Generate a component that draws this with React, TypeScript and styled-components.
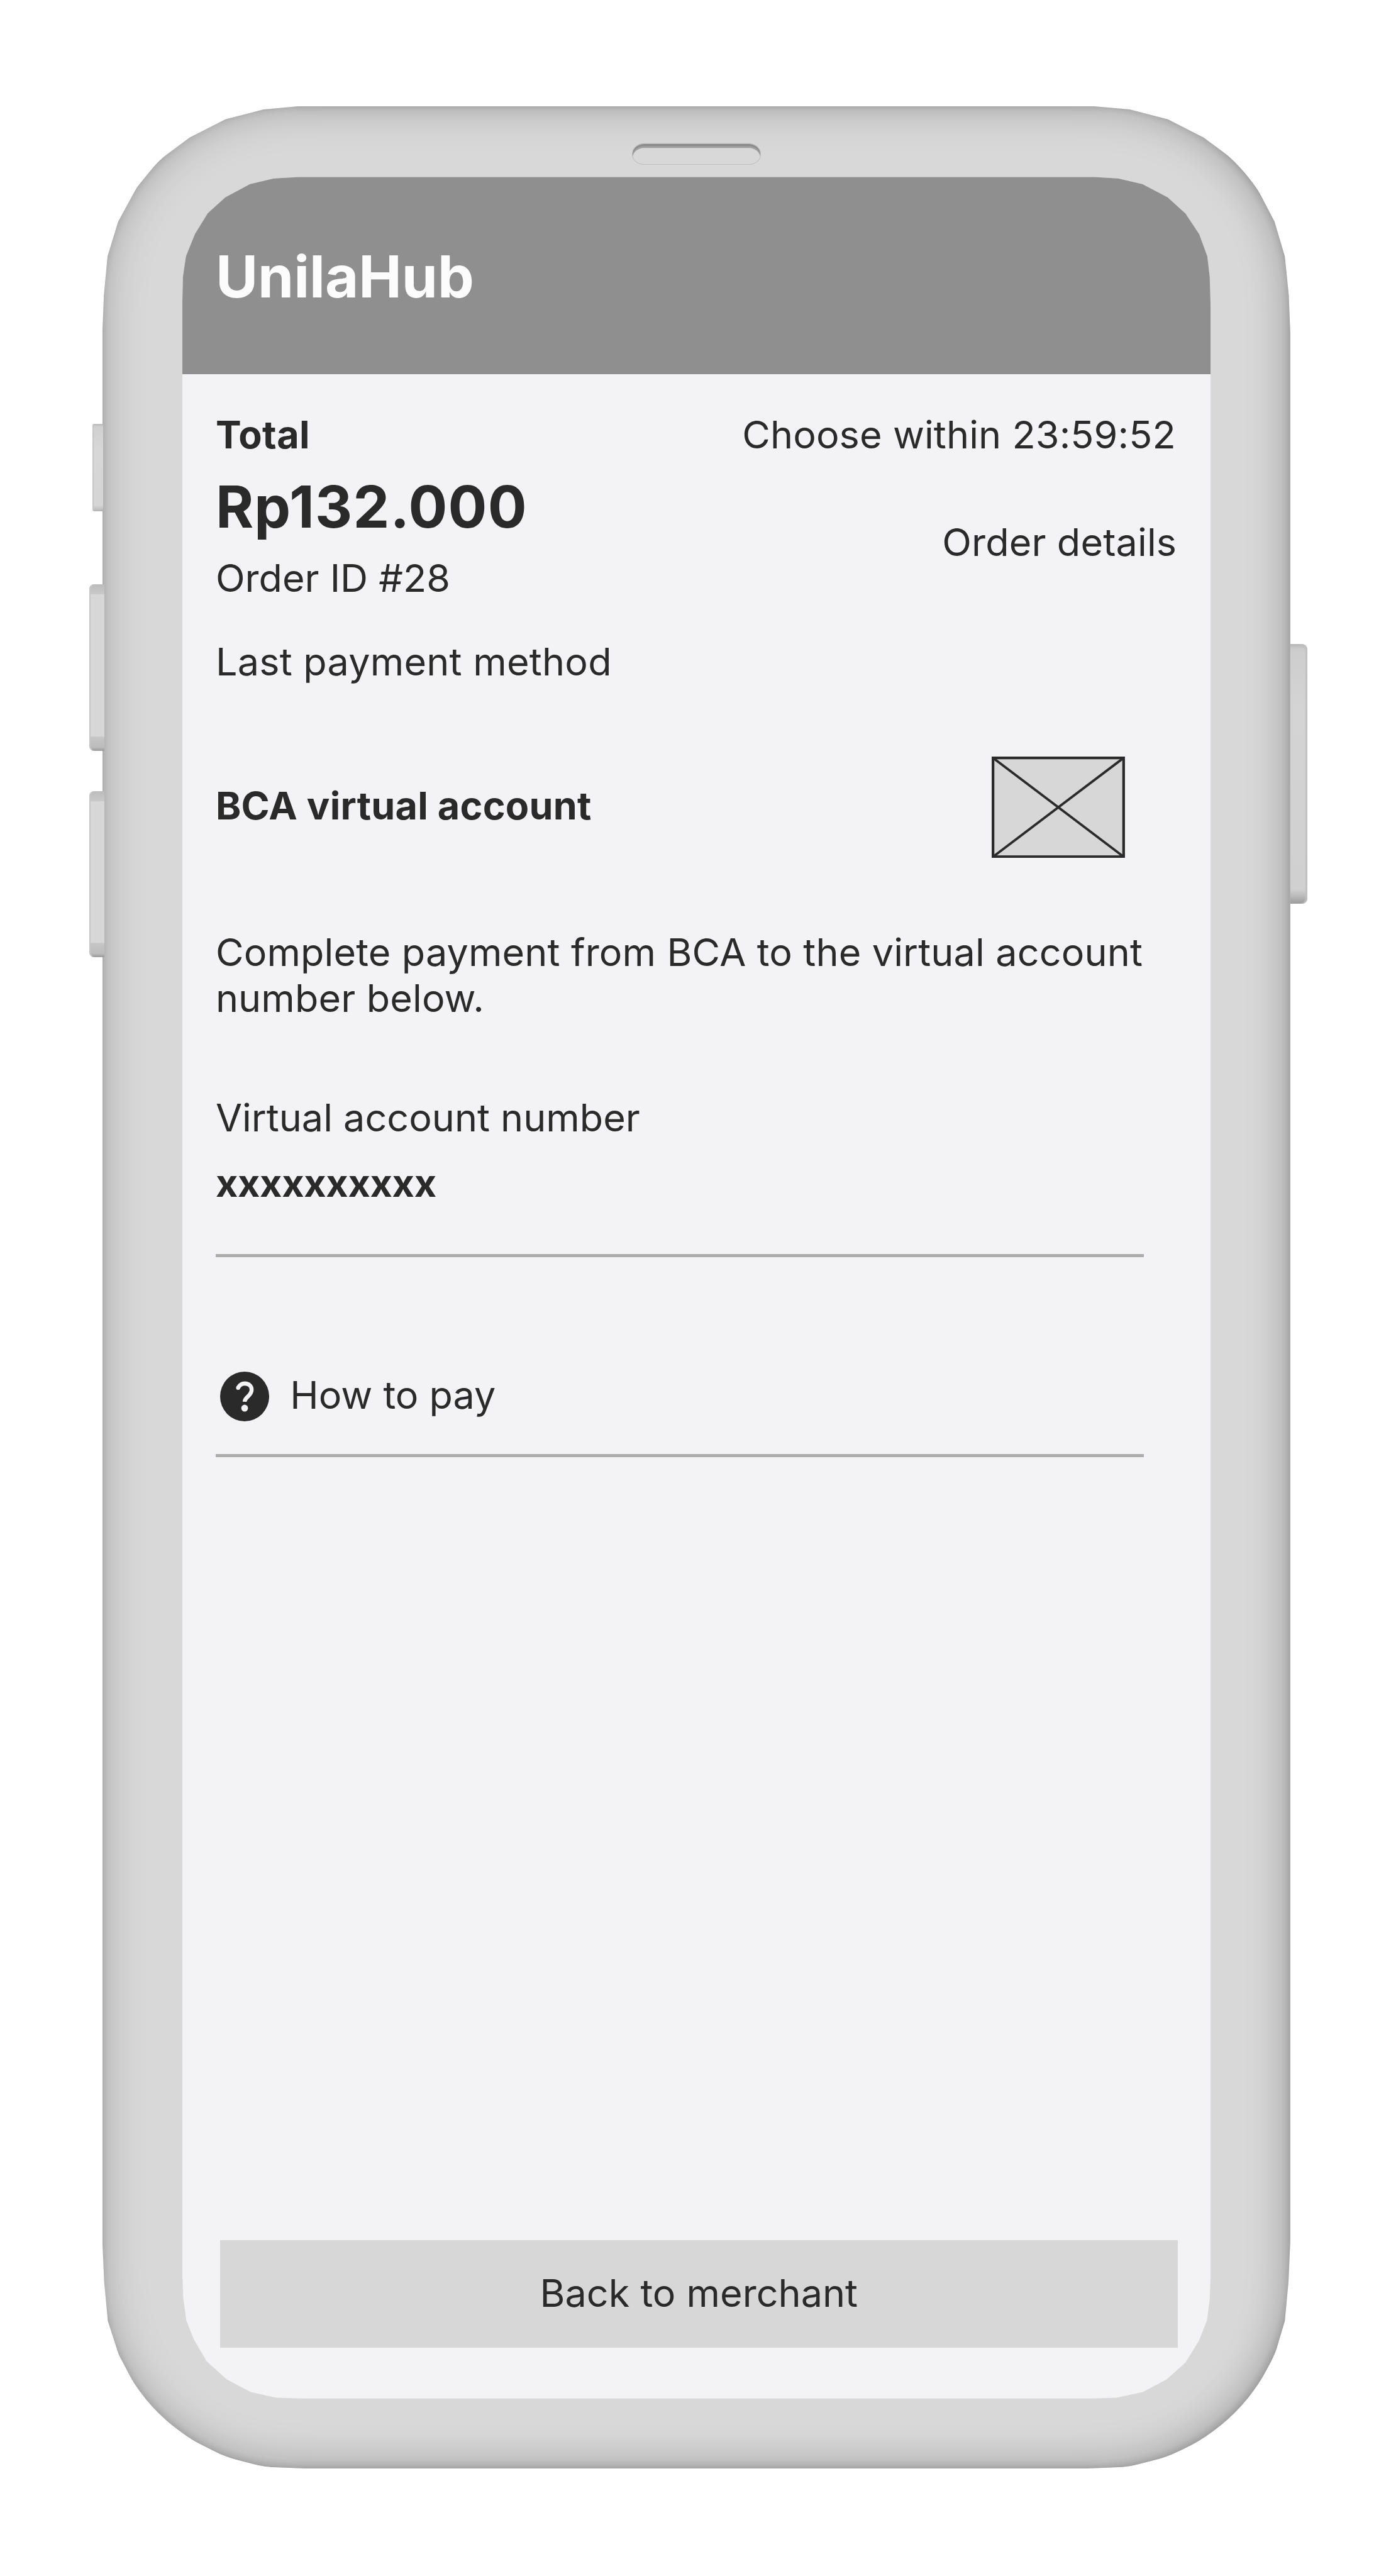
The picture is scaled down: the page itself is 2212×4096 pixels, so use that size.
import React from "react";
import styled, { createGlobalStyle } from "styled-components";

/* Lengths are written in design units and converted to screen pixels. */
const SCALE = 4096 / 4252;
const px = (n: number) => `${(n * SCALE).toFixed(2)}px`;

type Point = [number, number];
const outline = (points: Point[], left: number, top: number) =>
  `polygon(${points.map(([x, y]) => `${px(x - left)} ${px(y - top)}`).join(", ")})`;

const BODY = { left: 169, top: 175, right: 2130, bottom: 4074.7 };
const SCREEN = { left: 300.8, top: 292, right: 1998.6, bottom: 3959 };

const bodyOutline: Point[] = [
  [498, 175], [1800, 175], [1865, 180.5], [1928, 197], [1987, 227], [2041, 267],
  [2075, 310], [2104, 366], [2121, 423], [2127.5, 487], [2130, 550],
  [2130, 3700], [2127, 3767], [2121, 3831], [2104.5, 3886.5], [2075, 3941.7],
  [2038, 3988], [1987, 4026.5], [1927, 4055.3], [1862, 4071.8], [1789, 4074.7],
  [510, 4074.7], [436, 4071.8], [372, 4055.3], [315, 4026.5], [263, 3988],
  [225, 3941.7], [196, 3886.5], [178, 3831], [172, 3767], [169, 3700],
  [169, 550], [171.5, 487], [177.5, 423], [195, 366], [226, 309],
  [262, 265], [313, 227], [372, 197], [435, 180.5],
];

const screenOutline: Point[] = [
  [498, 292], [1802, 292], [1845.6, 294.5], [1886, 304], [1927.5, 325.7],
  [1957, 352.5], [1979.6, 386.5], [1993, 423], [1997, 457], [1998.6, 510],
  [1998.6, 3752], [1997, 3795], [1992.5, 3830], [1979, 3864], [1957, 3899.5],
  [1925.7, 3927.6], [1886.5, 3948.4], [1843, 3957.8], [1802, 3959],
  [502, 3959], [456, 3957.8], [414, 3948.4], [374.5, 3927.6], [341, 3897.5],
  [320, 3861.5], [307.6, 3830], [302.5, 3793], [300.8, 3748],
  [300.8, 510], [302, 457], [307, 423], [322, 386], [343, 352],
  [372, 325.7], [412.6, 304], [452, 294.5],
];

const GlobalStyle = createGlobalStyle`
  html, body { margin: 0; background: #fff; }
  *, *::before, *::after { box-sizing: border-box; }
`;

const Stage = styled.div`
  display: flex;
  align-items: flex-start;
  width: 2212px;
  height: 4096px;
  overflow: hidden;
  background: #fff;
  font-family: Inter, "Liberation Sans", sans-serif;
  font-optical-sizing: none;
  color: #2a2a2a;
`;

const Rail = styled.div<{ $width: number; $top: number; $side: "left" | "right" }>`
  display: flex;
  flex: none;
  flex-direction: column;
  align-items: ${(p) => (p.$side === "left" ? "flex-end" : "flex-start")};
  width: ${(p) => px(p.$width)};
  padding-top: ${(p) => px(p.$top)};
`;

const SideKey = styled.div<{ $width: number; $height: number; $gap?: number; $overlap?: number }>`
  position: relative;
  z-index: 1;
  width: ${(p) => px(p.$width)};
  height: ${(p) => px(p.$height)};
  margin-top: ${(p) => px(p.$gap ?? 0)};
  margin-right: ${(p) => px(-(p.$overlap ?? 0))};
  border-radius: ${px(8)} 0 0 ${px(8)};
  background: linear-gradient(
    to bottom,
    #bcbcbc 0,
    #c8c8c8 ${px(16)},
    #d7d7d7 ${px(17)},
    #d7d7d7 calc(100% - ${px(24)}),
    #c6c6c6 calc(100% - ${px(23)}),
    #bcbcbc calc(100% - ${px(6)}),
    #989898 100%
  );
  box-shadow: inset ${px(2)} 0 ${px(1)} #c6c6c6;
`;

const MuteKey = styled(SideKey)`
  border-radius: ${px(3)} 0 0 ${px(3)};
  background: linear-gradient(
    to bottom,
    #b8b8b8 0,
    #d0d0d0 ${px(5)},
    #d7d7d7 ${px(40)},
    #d5d5d5 calc(100% - ${px(10)}),
    #b4b4b4 100%
  );
`;

const PowerKey = styled(SideKey)`
  border-radius: 0 ${px(9)} ${px(9)} 0;
  background: linear-gradient(
    to bottom,
    #b6b6b6 0,
    #cbcbcb ${px(8)},
    #cecece ${px(16)},
    #d4d4d4 ${px(110)},
    #d0d0d0 calc(100% - ${px(24)}),
    #bdbdbd calc(100% - ${px(14)}),
    #9a9a9a 100%
  );
  box-shadow: inset ${px(-3)} 0 ${px(2)} #c0c0c0;
`;

const Body = styled.div`
  display: flex;
  flex: none;
  flex-direction: column;
  align-items: center;
  width: ${px(BODY.right - BODY.left)};
  height: ${px(BODY.bottom - BODY.top)};
  margin-top: ${px(BODY.top)};
  border-radius: ${px(314)};
  clip-path: ${outline(bodyOutline, BODY.left, BODY.top)};
  background: #d8d8d8;
  box-shadow:
    inset 0 0 ${px(76)} rgba(0, 0, 0, 0.19),
    inset 0 0 ${px(16)} rgba(0, 0, 0, 0.11),
    inset ${px(-12)} ${px(-7)} ${px(56)} rgba(0, 0, 0, 0.1),
    inset ${px(-3)} ${px(-2)} ${px(14)} rgba(0, 0, 0, 0.09);
`;

const Speaker = styled.div`
  flex: none;
  width: ${px(213)};
  height: ${px(34.5)};
  margin-top: ${px(62)};
  border: ${px(2)} solid #bebebe;
  border-top-color: #b4b4b4;
  border-radius: ${px(20)} / ${px(17)};
  background: #d8d8d8;
  box-shadow:
    inset 0 ${px(3.5)} ${px(1)} #8c8c8c,
    inset 0 ${px(6.5)} 0 #a0a0a0;
`;

const Screen = styled.main`
  display: flex;
  flex: none;
  flex-direction: column;
  align-self: flex-start;
  width: ${px(SCREEN.right - SCREEN.left)};
  height: ${px(SCREEN.bottom - SCREEN.top)};
  margin-top: ${px(SCREEN.top - BODY.top - 62 - 34.5)};
  margin-left: ${px(SCREEN.left - BODY.left)};
  clip-path: ${outline(screenOutline, SCREEN.left, SCREEN.top)};
  background: #f3f3f5;
`;

const Header = styled.header`
  flex: none;
  height: ${px(325.3)};
  padding: ${px(106.7)} 0 0 ${px(55.2)};
  border-top: ${px(2)} solid #c4c4c4;
  background: #8f8f8f;
`;

const Brand = styled.h1`
  margin: 0;
  color: #fcfcfc;
  font-size: ${px(95.3)};
  font-weight: 700;
  line-height: ${px(115)};
`;

const Content = styled.section`
  display: flex;
  flex: 1;
  flex-direction: column;
  padding: ${px(62.4)} ${px(54.6)} ${px(83.3)} ${px(55.2)};
`;

const Text = styled.p<{ $bold?: boolean; $track?: number; $gap?: number }>`
  margin: ${(p) => px(p.$gap ?? 0)} 0 0;
  font-size: ${px(63.4)};
  font-weight: ${(p) => (p.$bold ? 700 : 400)};
  line-height: ${px(76)};
  letter-spacing: ${(p) => px(p.$track ?? 0)};
  white-space: nowrap;
`;

const Amount = styled.p`
  margin: ${px(23.8)} 0 ${px(21.8)};
  font-size: ${px(95.3)};
  font-weight: 700;
  line-height: ${px(115)};
  letter-spacing: ${px(1.2)};
  white-space: nowrap;
`;

const Summary = styled.div`
  display: flex;
  justify-content: space-between;
`;

const SummaryAside = styled.div`
  display: flex;
  flex-direction: column;
  align-items: flex-end;
  margin-right: ${px(1.5)};
`;

const Countdown = styled(Text)`
  margin-right: ${px(1.5)};
`;

const BankRow = styled.div`
  display: flex;
  align-items: center;
  justify-content: space-between;
  height: ${px(167.5)};
  margin: ${px(117.9)} ${px(86.8)} ${px(118)} 0;
`;

const BankName = styled(Text)`
  padding-bottom: ${px(4)};
`;

const Placeholder = styled.svg`
  display: block;
  width: ${px(220)};
  height: ${px(167.5)};
`;

const Instructions = styled(Text)`
  width: ${px(1580)};
  white-space: normal;
`;

const Rule = styled.hr<{ $gap: number }>`
  flex: none;
  width: ${px(1532)};
  height: ${px(5)};
  margin: ${(p) => px(p.$gap)} 0 0;
  border: 0;
  background: #adadae;
`;

const HelpRow = styled.div`
  display: flex;
  gap: ${px(34.5)};
  height: ${px(82)};
  margin-top: ${px(189)};
  padding-left: ${px(7.5)};
`;

const HelpGlyph = styled.svg`
  display: block;
  width: ${px(81)};
  height: ${px(82)};
`;

const BackButton = styled.button`
  display: flex;
  align-items: center;
  justify-content: center;
  height: ${px(178.4)};
  margin: auto 0 0 ${px(7.3)};
  padding: 0 0 ${px(1)};
  border: 0;
  background: #d7d7d7;
  color: #2a2a2a;
  font-family: inherit;
`;

const ImagePlaceholder = () => (
  <Placeholder viewBox="0 0 220 167.5" fill="none" stroke="#2b2b2b" strokeWidth="4.4">
    <rect x="2.2" y="2.2" width="215.6" height="163.1" fill="#d7d7d7" />
    <path d="M2 2 218 165.5M218 2 2 165.5" strokeWidth="4" />
  </Placeholder>
);

const HelpIcon = () => (
  <HelpGlyph viewBox="2 2 20 20" preserveAspectRatio="none">
    <circle cx="12" cy="12" r="10" fill="#2a2a2a" />
    <path
      d="M9.3 8.55C9.9 7.4 10.9 6.78 12.1 6.78c1.6 0 2.75 1.05 2.75 2.5 0 1.15-.6 1.85-1.4 2.6-.8.75-1.4 1.2-1.45 2.25"
      fill="none"
      stroke="#f3f3f5"
      strokeWidth="1.65"
    />
    <circle cx="9.35" cy="8.5" r=".82" fill="#f3f3f5" />
    <circle cx="12" cy="16.7" r="1.38" fill="#f3f3f5" />
  </HelpGlyph>
);

export default function App() {
  return (
    <Stage>
      <GlobalStyle />
      <Rail $side="left" $width={169} $top={700}>
        <MuteKey $width={18} $height={144} $overlap={1.3} />
        <SideKey $width={24.5} $height={276} $gap={120} $overlap={3} />
        <SideKey $width={24.5} $height={273.6} $gap={66} $overlap={3} />
      </Rail>
      <Body>
        <Speaker />
        <Screen>
          <Header>
            <Brand>UnilaHub</Brand>
          </Header>
          <Content>
            <Summary>
              <div>
                <Text $bold $track={0.4}>Total</Text>
                <Amount>Rp132.000</Amount>
                <Text>Order ID #28</Text>
              </div>
              <SummaryAside>
                <Countdown $track={0.1}>Choose within 23:59:52</Countdown>
                <Text $track={0.15} $gap={101.4}>Order details</Text>
              </SummaryAside>
            </Summary>
            <Text $track={0.25} $gap={62.4}>Last payment method</Text>
            <BankRow>
              <BankName $bold $track={0.25}>BCA virtual account</BankName>
              <ImagePlaceholder />
            </BankRow>
            <Instructions $track={0.15}>
              Complete payment from BCA to the virtual account
              <br />
              number below.
            </Instructions>
            <Text $gap={121.8}>Virtual account number</Text>
            <Text $bold $track={-0.35} $gap={31.2}>xxxxxxxxxx</Text>
            <Rule $gap={78.8} />
            <HelpRow>
              <HelpIcon />
              <Text $gap={1}>How to pay</Text>
            </HelpRow>
            <Rule $gap={54.5} />
            <BackButton>
              <Text as="span">Back to merchant</Text>
            </BackButton>
          </Content>
        </Screen>
      </Body>
      <Rail $side="right" $width={166} $top={1063}>
        <PowerKey $width={28} $height={429} />
      </Rail>
    </Stage>
  );
}
